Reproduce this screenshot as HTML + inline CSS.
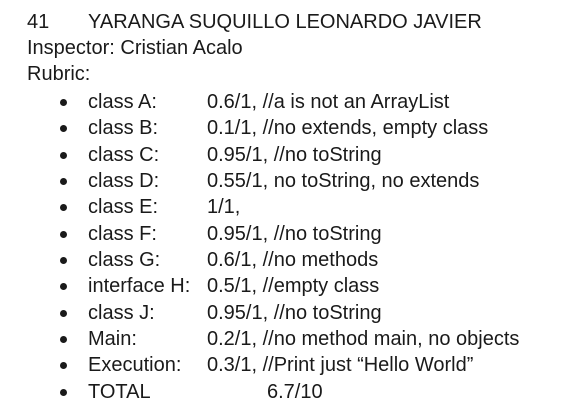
<!DOCTYPE html>
<html><head><style>
body{margin:0;width:573px;height:410px;background:#fff;font-family:"Liberation Sans",sans-serif;font-size:20px;color:#1a1a1a;position:relative;overflow:hidden}
.l{position:absolute;white-space:pre;line-height:20px}
.b{position:absolute;width:7px;height:7px;border-radius:50%;background:#1a1a1a}
</style></head><body>
<div class="l" style="left:27px;top:12px">41</div>
<div class="l" style="left:88px;top:12px">YARANGA SUQUILLO LEONARDO JAVIER</div>
<div class="l" style="left:27px;top:38px">Inspector: Cristian Acalo</div>
<div class="l" style="left:27px;top:64px">Rubric:</div>

<div class="b" style="left:60px;top:99px"></div><div class="l" style="left:88px;top:92px">class A:</div><div class="l" style="left:207px;top:92px">0.6/1, //a is not an ArrayList</div>
<div class="b" style="left:60px;top:125px"></div><div class="l" style="left:88px;top:118px">class B:</div><div class="l" style="left:207px;top:118px">0.1/1, //no extends, empty class</div>
<div class="b" style="left:60px;top:152px"></div><div class="l" style="left:88px;top:145px">class C:</div><div class="l" style="left:207px;top:145px">0.95/1, //no toString</div>
<div class="b" style="left:60px;top:178px"></div><div class="l" style="left:88px;top:171px">class D:</div><div class="l" style="left:207px;top:171px">0.55/1, no toString, no extends</div>
<div class="b" style="left:60px;top:204px"></div><div class="l" style="left:88px;top:197px">class E:</div><div class="l" style="left:207px;top:197px">1/1,</div>
<div class="b" style="left:60px;top:231px"></div><div class="l" style="left:88px;top:224px">class F:</div><div class="l" style="left:207px;top:224px">0.95/1, //no toString</div>
<div class="b" style="left:60px;top:257px"></div><div class="l" style="left:88px;top:250px">class G:</div><div class="l" style="left:207px;top:250px">0.6/1, //no methods</div>
<div class="b" style="left:60px;top:283px"></div><div class="l" style="left:88px;top:276px">interface H:</div><div class="l" style="left:207px;top:276px">0.5/1, //empty class</div>
<div class="b" style="left:60px;top:310px"></div><div class="l" style="left:88px;top:303px">class J:</div><div class="l" style="left:207px;top:303px">0.95/1, //no toString</div>
<div class="b" style="left:60px;top:336px"></div><div class="l" style="left:88px;top:329px">Main:</div><div class="l" style="left:207px;top:329px">0.2/1, //no method main, no objects</div>
<div class="b" style="left:60px;top:362px"></div><div class="l" style="left:88px;top:355px">Execution:</div><div class="l" style="left:207px;top:355px">0.3/1, //Print just “Hello World”</div>
<div class="b" style="left:60px;top:389px"></div><div class="l" style="left:88px;top:382px">TOTAL</div><div class="l" style="left:267px;top:382px">6.7/10</div>
</body></html>
